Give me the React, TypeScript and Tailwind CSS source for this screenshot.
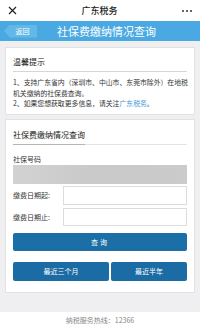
import React from "react";

export default function App() {
  const font = { fontFamily: '"Noto Sans CJK SC", "Noto Sans", sans-serif' };
  return (
    <div className="w-[200px] h-[327px] bg-[#efeff2] flex flex-col overflow-hidden" style={font}>
      {/* top white header */}
      <div className="h-[21px] bg-white flex items-center justify-between px-[8px] shrink-0">
        <svg width="9" height="9" viewBox="0 0 9 9">
          <path d="M1 1 L8 8 M8 1 L1 8" stroke="#222" strokeWidth="1.2" />
        </svg>
        <div className="text-[9px] leading-[10px] text-[#222] font-medium">广东税务</div>
        <div className="flex gap-[2px] items-center">
          <div className="w-[2px] h-[2px] rounded-full bg-[#333]" />
          <div className="w-[2px] h-[2px] rounded-full bg-[#333]" />
          <div className="w-[2px] h-[2px] rounded-full bg-[#333]" />
        </div>
      </div>
      {/* blue bar */}
      <div className="h-[20px] bg-[#4aa9e2] flex items-center shrink-0">
        <div className="ml-[4px] w-[33px] h-[13px] bg-[#62b9e7] [clip-path:polygon(0_50%,6px_0,100%_0,100%_100%,6px_100%)] flex items-center justify-center pl-[4px]">
          <span className="text-[7px] leading-[8px] text-white">返回</span>
        </div>
        <div className="ml-[20px] text-[11px] leading-[12px] text-white whitespace-nowrap">社保费缴纳情况查询</div>
      </div>
      {/* card 1 */}
      <div className="mx-[5px] mt-[6px] bg-white border border-[#e2e2e2] px-[7px] pt-[9px] pb-[5px]">
        <div className="border-b border-[#d6d6d6] pb-[4px]">
          <div className="text-[8px] leading-[10px] text-[#222]">温馨提示</div>
        </div>
        <div className="mt-[5px] text-[6.85px] leading-[10.5px] text-[#333] whitespace-nowrap">
          <div>1、支持广东省内（深圳市、中山市、东莞市除外）在地税</div>
          <div>机关缴纳的社保费查询。</div>
          <div>
            2、如果您想获取更多信息，请关注<span className="text-[#3d96d8]">广东税务</span>。
          </div>
        </div>
      </div>
      {/* card 2 */}
      <div className="mx-[5px] mt-[4px] bg-white border border-[#e2e2e2] px-[7px] pt-[10px] pb-[11px]">
        <div className="flex border-b border-[#e3e3e3]">
          <div className="border-b border-[#b5b5b5] -mb-px pb-[4px] text-[8px] leading-[10px] text-[#222]">
            社保费缴纳情况查询
          </div>
        </div>
        <div className="mt-[9px] text-[7px] leading-[10px] text-[#333]">社保号码</div>
        <div className="mt-[1px] h-[19px] bg-gradient-to-r from-[#d2d2d2] via-[#c9c9c9] to-[#cbcbcb]" />
        <div className="mt-[2px] flex items-center">
          <div className="w-[50px] text-[7px] leading-[10px] text-[#333]">缴费日期起:</div>
          <div className="flex-1 h-[19px] border border-[#dcdcdc] bg-white" />
        </div>
        <div className="mt-[3px] flex items-center">
          <div className="w-[50px] text-[7px] leading-[10px] text-[#333]">缴费日期止:</div>
          <div className="flex-1 h-[18px] border border-[#dcdcdc] bg-white" />
        </div>
        <div className="mt-[7px] h-[18px] bg-[#1c6ea6] rounded-[2px] flex items-center justify-center">
          <span className="text-[7px] leading-[10px] text-white tracking-[2px]">查询</span>
        </div>
        <div className="mt-[11px] flex gap-[2px]">
          <div className="w-[96px] h-[19px] bg-[#1b6ba4] rounded-[2px] flex items-center justify-center">
            <span className="text-[7px] leading-[10px] text-white">最近三个月</span>
          </div>
          <div className="flex-1 h-[19px] bg-[#1b6ba4] rounded-[2px] flex items-center justify-center">
            <span className="text-[7px] leading-[10px] text-white">最近半年</span>
          </div>
        </div>
      </div>
      <div className="flex-1" />
      <div className="h-[15px] bg-white flex items-center justify-center shrink-0">
        <span className="text-[7px] leading-[10px] text-[#888]">纳税服务热线：12366</span>
      </div>
    </div>
  );
}
